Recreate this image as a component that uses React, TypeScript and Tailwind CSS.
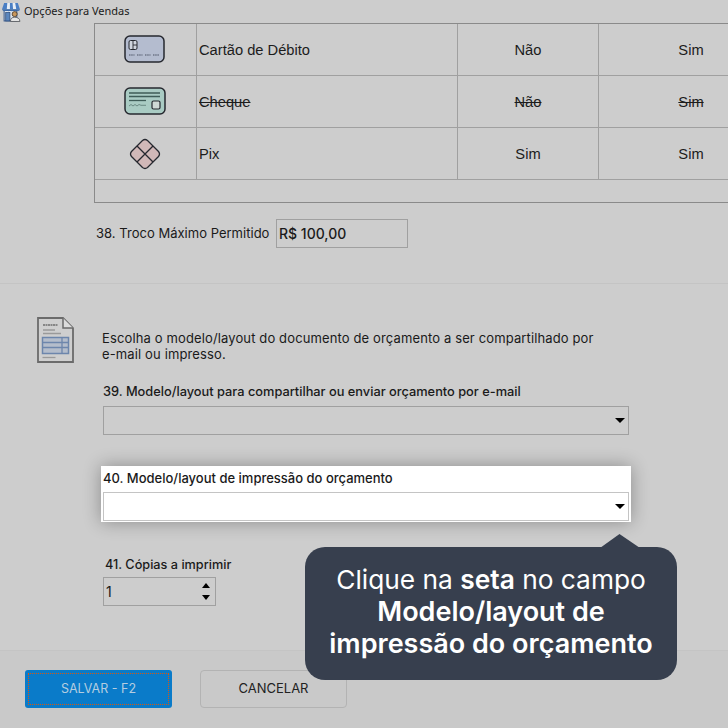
import React from "react";

const inter = { fontFamily: "Inter, sans-serif" };

function StoreIcon() {
  return (
    <svg width="19" height="20" viewBox="0 0 18 19" className="shrink-0">
      <rect x="2" y="8" width="12" height="10" fill="#dfe6ee" stroke="#3a5a8c" />
      <rect x="3.500" y="10" width="4" height="8" fill="#5b86bd" stroke="#2b4a78" strokeWidth="0.700" />
      <path d="M2 1h13l2 6H0z" fill="#4b7fc4" />
      <path d="M5 1h2.500v6H4.500zM10 1h2.500l1 6H10.500z" fill="#e8eef5" />
      <path d="M0 7h17c0 1.500-2 2-3 1-1 1-2.500 1-3 0-1 1-2.500 1-3 0-1 1-2.500 1-3 0-1.500 1-5 1-5-1z" fill="#3d6cab" />
      <circle cx="12" cy="11.500" r="2.400" fill="#c9975c" stroke="#4a3a2a" strokeWidth="0.800" />
      <path d="M8 18.500c0-3 1.500-4 4-4s5 1 5 4z" fill="#e6e6e6" stroke="#54565a" strokeWidth="0.800" />
    </svg>
  );
}

function DebitIcon() {
  return (
    <svg width="42" height="28" viewBox="0 0 42 28">
      <rect x="1" y="1" width="39" height="26" rx="5" fill="#b4bccf" stroke="#26282f" strokeWidth="1.500" />
      <rect x="5" y="5.500" width="8" height="9" rx="1.500" fill="#cfd4dd" stroke="#26282f" />
      <path d="M9 5.500v9M9 10H13" stroke="#26282f" strokeWidth="0.900" />
      <path d="M5 20h5.500M13 20h5.500M21 20h5.500M29 20h6" stroke="#7f8698" strokeWidth="2" strokeDasharray="1.500 0.700" />
    </svg>
  );
}

function ChequeIcon() {
  return (
    <svg width="42" height="28" viewBox="0 0 42 28">
      <rect x="1" y="1" width="40" height="26" rx="5" fill="#a9cbc3" stroke="#26282f" strokeWidth="1.500" />
      <path d="M5 6h31M5 9.500h31" stroke="#3f5d58" strokeWidth="1.300" />
      <path d="M5 13.500h17" stroke="#3f5d58" strokeWidth="1.300" />
      <path d="M5 19l2-1.500 2 1.500 2-1.500 2 1.500 2-1.500 2 .8h5" fill="none" stroke="#5b7a74" strokeWidth="0.800" />
      <rect x="28" y="14" width="8" height="8" rx="1.500" fill="#cfd8d5" stroke="#26282f" strokeWidth="1.200" />
    </svg>
  );
}

function PixIcon() {
  return (
    <svg width="32" height="32" viewBox="0 0 32 32">
      <path d="M13.500 2.500 Q16 0.500 18.500 2.500 L29.500 13.500 Q31.500 16 29.500 18.500 L18.500 29.500 Q16 31.500 13.500 29.500 L2.500 18.500 Q0.500 16 2.500 13.500z" fill="#d1b8b8" stroke="#26282f" strokeWidth="1.300" />
      <path d="M8 8 L16 16 L24 8 M8 24 L16 16 L24 24" fill="none" stroke="#26282f" strokeWidth="1.300" strokeLinejoin="round" />
    </svg>
  );
}

function DocIcon() {
  return (
    <svg width="37" height="46" viewBox="0 0 37 46">
      <path d="M1 1h25l10 10v34H1z" fill="#cfcfcf" stroke="#6b6b6b" strokeWidth="1.800" />
      <path d="M26 1v10h10" fill="#dcdcdc" stroke="#6b6b6b" strokeWidth="1.500" />
      <path d="M6 8h15" stroke="#6f6f6f" strokeWidth="1.500" strokeDasharray="2 0.500" />
      <path d="M6 13h12M6 16.500h18" stroke="#9a9a9a" strokeWidth="1.300" />
      <rect x="5.500" y="20.500" width="26" height="16" fill="#b4bdcb" stroke="#6d86ac" strokeWidth="1.500" />
      <path d="M5.500 25.500h26M5.500 30.500h26M25 20.500v16" stroke="#6d86ac" strokeWidth="1.300" />
      <path d="M5.500 40.500h13" stroke="#9a9a9a" strokeWidth="1.300" />
    </svg>
  );
}

function Caret() {
  return (
    <svg width="10" height="5" viewBox="0 0 10 5" className="shrink-0">
      <path d="M0 0h10L5 5z" fill="#000" />
    </svg>
  );
}

function Row({ icon, label, a, b, strike, lift }: { icon: React.ReactNode; label: string; a: string; b: string; strike?: boolean; lift?: boolean }) {
  const text = strike ? "line-through" : "";
  return (
    <div className="grid grid-cols-[102px_261px_141px_186px] h-[52px] border-b border-[#a0a0a0] text-[14.700px] text-[#1c1c1c]" style={{ fontFamily: '"Liberation Sans", sans-serif' }}>
      <div className={`flex items-center justify-center pr-[1px] border-r border-[#a0a0a0] ${lift ? "pb-[2px]" : ""}`}>{icon}</div>
      <div className={`flex items-center pl-[2px] pt-[2px] border-r border-[#a0a0a0] ${text}`}>{label}</div>
      <div className={`flex items-center justify-center pt-[2px] border-r border-[#a0a0a0] ${text}`}>{a}</div>
      <div className={`flex items-center justify-center pt-[2px] pr-[2px] ${text}`}>{b}</div>
    </div>
  );
}

export default function App() {
  return (
    <div className="relative flex flex-col w-[728px] h-[728px] overflow-hidden bg-[#cdcdcd] text-[#1a1a1a]" style={inter}>
      <div className="flex items-center gap-[3px] h-[23px] pl-[2px] text-[11px]" style={{ fontFamily: '"Noto Sans", sans-serif' }}>
        <StoreIcon />
        <span>Opções para Vendas</span>
      </div>

      <div className="flex-1">
        <div className="ml-[94px] w-[691px] h-[180px] border border-[#8a8a8a]">
          <Row icon={<DebitIcon />} label="Cartão de Débito" a="Não" b="Sim" lift />
          <Row icon={<ChequeIcon />} label="Cheque" a="Não" b="Sim" strike lift />
          <Row icon={<PixIcon />} label="Pix" a="Sim" b="Sim" />
        </div>

        <div className="flex items-center mt-[16px] ml-[96px] text-[13px]">
          <span className="w-[180px] shrink-0 tracking-[0.02px]">38. Troco Máximo Permitido</span>
          <div className="flex items-center w-[132px] h-[29px] pl-[2px] border border-[#a0a0a0] text-[14px] font-medium">R$ 100,00</div>
        </div>

        <div className="mt-[35px] h-px bg-[#c4c4c4]" />

        <div className="flex ml-[37px]">
          <div className="mt-[33px] shrink-0"><DocIcon /></div>
          <div className="ml-[28px] mt-[46px] w-[530px]">
            <p className="text-[13px] leading-[16px] tracking-[0.13px]">
              Escolha o modelo/layout do documento de orçamento a ser compartilhado por
              <br />
              e-mail ou impresso.
            </p>
            <div className="ml-[1px] mt-[21px] h-[17px] text-[12.800px] font-medium leading-[17px]">39. Modelo/layout para compartilhar ou enviar orçamento por e-mail</div>
            <div className="ml-[1px] mt-[6px] flex items-center justify-end w-[526px] h-[29px] pr-[3px] border border-[#a0a0a0]">
              <Caret />
            </div>
            <div className="-ml-[1px] mt-[31px] w-[530px] h-[56px] pl-[2px] pr-[2px] bg-white shadow-[0_0_18px_rgba(0,0,0,0.32)]">
              <div className="h-[26px] pt-[4px] text-[13px] font-medium leading-[17px]">40. Modelo/layout de impressão do orçamento</div>
              <div className="flex items-center justify-end h-[29px] pr-[3px] border border-[#c4c4c4]">
                <Caret />
              </div>
            </div>
            <div className="ml-[3px] mt-[34px] h-[17px] text-[12.700px] font-medium leading-[17px]">41. Cópias a imprimir</div>
            <div className="ml-[1px] mt-[4px] flex items-center justify-between w-[113px] h-[29px] pl-[2px] pr-[5px] border border-[#a0a0a0] text-[14px]">
              <span>1</span>
              <div className="flex flex-col gap-[7px]">
                <div className="rotate-180 flex"><svg width="8" height="5" viewBox="0 0 8 5"><path d="M0 0h8L4 5z" fill="#000" /></svg></div>
                <div className="flex"><svg width="8" height="5" viewBox="0 0 8 5"><path d="M0 0h8L4 5z" fill="#000" /></svg></div>
              </div>
            </div>
          </div>
        </div>
      </div>

      <div className="flex gap-[28px] h-[78px] pt-[19px] pl-[25px] bg-[#c9c9c9] border-t border-[#c4c4c4] text-[13px]">
        <div className="flex w-[147px] h-[38px] p-[3px] rounded-[3px] bg-[#0a7bc9] text-[12.500px] text-[#b4cde0]">
          <span className="flex flex-1 items-center justify-center border border-dotted border-[#d9580f]">SALVAR - F2</span>
        </div>
        <div className="flex items-center justify-center w-[147px] h-[38px] rounded-[4px] border border-[#b3b3b3] text-[#222]">CANCELAR</div>
      </div>

      <div className="absolute left-[305px] top-[547px] w-[372px] h-[133px] flex flex-col justify-center pb-[4px] rounded-[20px] bg-[#373f4e] text-center text-white leading-[32px]">
        <svg width="40" height="14" viewBox="0 0 40 14" className="absolute left-[295px] -top-[13px]">
          <path d="M0 14 19.500 0 40 14z" fill="#373f4e" />
        </svg>
        <div className="text-[26.300px]">Clique na <b className="font-semibold">seta</b> no campo</div>
        <div className="text-[27px] font-semibold">Modelo/layout de</div>
        <div className="text-[27px] font-semibold">impressão do orçamento</div>
      </div>
    </div>
  );
}
